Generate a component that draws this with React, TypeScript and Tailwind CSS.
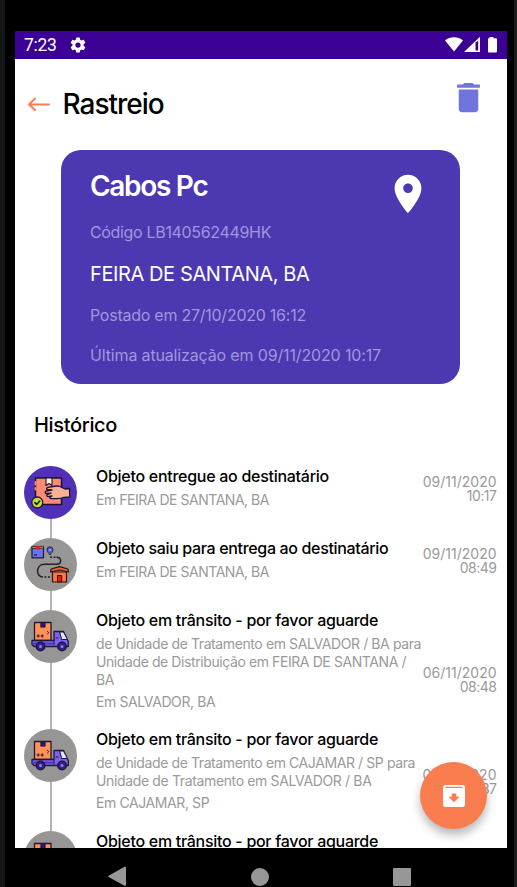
import type { ReactNode } from 'react';

type Line = { text: string; track: string };
type Event = {
  title: Line;
  details: Line[];
  place?: Line;
  date?: string;
  time?: string;
  height: string;
  kind: 'delivered' | 'route' | 'truck';
};

const events: Event[] = [
  {
    title: { text: 'Objeto entregue ao destinatário', track: 'tracking-[-0.28px]' },
    details: [],
    place: { text: 'Em FEIRA DE SANTANA, BA', track: 'tracking-[-0.47px]' },
    date: '09/11/2020', time: '10:17', height: 'h-[72px]', kind: 'delivered',
  },
  {
    title: { text: 'Objeto saiu para entrega ao destinatário', track: 'tracking-[-0.34px]' },
    details: [],
    place: { text: 'Em FEIRA DE SANTANA, BA', track: 'tracking-[-0.47px]' },
    date: '09/11/2020', time: '08:49', height: 'h-[72px]', kind: 'route',
  },
  {
    title: { text: 'Objeto em trânsito - por favor aguarde', track: 'tracking-[-0.29px]' },
    details: [
      { text: 'de Unidade de Tratamento em SALVADOR / BA para', track: 'tracking-[-0.4px]' },
      { text: 'Unidade de Distribuição em FEIRA DE SANTANA /', track: 'tracking-[-0.41px]' },
      { text: 'BA', track: 'tracking-[-0.4px]' },
    ],
    place: { text: 'Em SALVADOR, BA', track: 'tracking-[-0.4px]' },
    date: '06/11/2020', time: '08:48', height: 'h-[119px]', kind: 'truck',
  },
  {
    title: { text: 'Objeto em trânsito - por favor aguarde', track: 'tracking-[-0.29px]' },
    details: [
      { text: 'de Unidade de Tratamento em CAJAMAR / SP para', track: 'tracking-[-0.4px]' },
      { text: 'Unidade de Tratamento em SALVADOR / BA', track: 'tracking-[-0.36px]' },
    ],
    place: { text: 'Em CAJAMAR, SP', track: 'tracking-[-0.4px]' },
    date: '04/11/2020', time: '09:37', height: 'h-[102px]', kind: 'truck',
  },
  {
    title: { text: 'Objeto em trânsito - por favor aguarde', track: 'tracking-[-0.29px]' },
    details: [],
    height: 'h-[72px]', kind: 'truck',
  },
];

function PackageHand() {
  return (
    <svg viewBox="0 0 53 53" className="size-[53px]" strokeLinejoin="round" strokeLinecap="round">
      <path d="M11.500 12h26v26.500h-26z" fill="#ff8c72" stroke="#1b1233" strokeWidth="1.500" />
      <path d="M22 12v7.500l3-2 3 2V12z" fill="#fff0e8" stroke="#1b1233" strokeWidth="1.100" />
      <path d="M11.500 16v2.500M11.500 22v1.500" stroke="#ff8c72" strokeWidth="1.800" />
      <path d="M45.500 22.500L41 23l-5-2.500c-3-1-5-.5-7 0l-5 .8c-2 .5-1.800 2.300 0 2.400l4 .3-5.500 1c-2 .5-1.600 2.600 0 2.500l4.500-.3-3.300 1.200c-1.700.8-.6 2.400 1 2.100l3.300-.6-1.700 1c-1 1 .2 2 1.500 1.700 4-.3 9 .8 12-1.300l6-.3z" fill="#ffaf91" stroke="#1b1233" strokeWidth="1.300" />
      <circle cx="13.300" cy="36.500" r="5.500" fill="#c3dc33" stroke="#1b1233" strokeWidth="1.300" />
      <path d="M10.800 36.600l1.800 1.800 3.200-3.300" fill="none" stroke="#1b1233" strokeWidth="1.500" />
    </svg>
  );
}

function RouteHouse() {
  return (
    <svg viewBox="0 0 53 53" className="size-[53px]" strokeLinejoin="round">
      <path d="M8 8.500h11.500v11.300H8z" fill="#6674ed" stroke="#211a35" strokeWidth="1.200" />
      <path d="M8 8.300h11.500v2.200H8z" fill="#d48a3b" stroke="#211a35" strokeWidth=".7" />
      <path d="M12 8h4v4l-2-1-2 1z" fill="#e31c1c" />
      <path d="M10 17h3" stroke="#211a35" strokeWidth="1.200" />
      <path d="M26 17c-1-2-3-3-3-5.200a3 3 0 0 1 6 0c0 2.200-2 3.200-3 5.200z" fill="#4f5fc6" stroke="#242447" strokeWidth="1" />
      <circle cx="26" cy="12" r="1.100" fill="#a7b1ff" />
      <path d="M26 19.200h2M29.500 19.200h2M32.500 19.200c5.500 0 5.500 7 0 7H20.500c-9 0-9 12.800-1.500 12.800M20.500 39h2M24 39h2" fill="none" stroke="#24202b" strokeWidth="1.500" />
      <path d="M28.500 34h14v10h-14z" fill="#ff7647" stroke="#30150f" strokeWidth="1.200" />
      <path d="M26.500 34l.6-3 8.400-2.300 8.400 2.300.6 3-9-2z" fill="#e9603c" stroke="#30150f" strokeWidth="1.200" />
      <path d="M33.500 37.500h4.200V44h-4.200z" fill="#ed1808" stroke="#30150f" strokeWidth="1" />
    </svg>
  );
}

function Truck() {
  return (
    <svg viewBox="0 0 53 53" className="size-[53px]" strokeLinejoin="round" strokeLinecap="round">
      <path d="M10.500 12.500H27v18H10.500z" fill="#ff9254" stroke="#21163b" strokeWidth="1.300" />
      <path d="M17 12.500h4.200v4.700H17z" fill="#2a1674" stroke="#21163b" strokeWidth=".7" />
      <path d="M13 26h2.400M17 26h2.400M14.200 24.800v2.400M18.200 24.800v2.400M23.500 21.500l1.300 1.200-1.300 1.200" fill="none" stroke="#21163b" strokeWidth="1" />
      <path d="M8 30.500h22v-9h9.500l4 8.500.8 1.500v5H10l-2-2z" fill="#7c63ee" stroke="#21163b" strokeWidth="1.300" />
      <path d="M36 22h3.500l4 7.500H38z" fill="#dfe7fb" stroke="#21163b" strokeWidth="1" />
      <path d="M32 28h2M30 31v4" stroke="#21163b" strokeWidth="1" />
      <path d="M8.600 33.700h20" stroke="#4a35b8" strokeWidth="1.800" />
      {[16.5, 38].map((x) => (
        <g key={x}>
          <circle cx={x} cy="36.500" r="4.300" fill="#31208a" stroke="#1b1233" strokeWidth="1.200" />
          <circle cx={x} cy="36.500" r="1.500" fill="#8f83ea" />
        </g>
      ))}
    </svg>
  );
}

const icons: Record<Event['kind'], ReactNode> = {
  delivered: <PackageHand />,
  route: <RouteHouse />,
  truck: <Truck />,
};

function TimelineRow({ event }: { event: Event }) {
  return (
    <li className={`flex shrink-0 pr-[10.5px] pl-[9px] ${event.height}`}>
      <div className="flex w-[53px] shrink-0 flex-col items-center">
        <div className={`size-[53px] shrink-0 rounded-full ${event.kind === 'delivered' ? 'bg-[#5030b6]' : 'bg-[#979695]'}`}>
          {icons[event.kind]}
        </div>
        <div className="w-[2px] grow bg-[#b4b4b4]" />
      </div>
      <div className="ml-[19px] flex w-[325px] shrink-0 flex-col whitespace-nowrap text-sm leading-[18px] text-[#9a9a9a]">
        <h3 className={`-mt-[1.5px] mb-1 text-base leading-[22px] font-medium text-black ${event.title.track}`}>{event.title.text}</h3>
        {event.details.length > 0 && (
          <div className="mb-1">
            {event.details.map((line) => <p key={line.text} className={line.track}>{line.text}</p>)}
          </div>
        )}
        {event.place && <p className={event.place.track}>{event.place.text}</p>}
      </div>
      {event.date && (
        <div className="flex grow flex-col items-end justify-end pb-[35.5px] text-sm leading-[14px] text-[#9a9a9a]">
          <span className="whitespace-nowrap">{event.date}</span>
          <span className="tracking-[-0.5px]">{event.time}</span>
        </div>
      )}
    </li>
  );
}

export default function App() {
  return (
    <div className="flex h-[887px] w-[517px] flex-col overflow-hidden border-r-[3px] border-l-[5px] border-r-[#1c1c1c] border-l-[#161616] bg-black pt-[31px] font-['Inter',sans-serif]">
      <div className="relative mr-[7px] ml-[10px] flex h-[817px] shrink-0 flex-col overflow-hidden bg-white">
        <div className="flex h-[28px] shrink-0 items-center bg-[#3b0094] px-[9px] text-white">
          <span className="w-[45px] pt-px font-['Roboto',sans-serif] text-[17.5px] tracking-[-0.3px]">7:23</span>
          <svg viewBox="0 0 24 24" className="size-[18px]" fill="currentColor">
            <path d="M19.430 12.980a7.800 7.800 0 0 0 0-1.960l2.110-1.650a.5.5 0 0 0 .12-.64l-2-3.460a.5.5 0 0 0-.61-.22l-2.490 1a7.300 7.300 0 0 0-1.690-.98l-.38-2.650A.49.49 0 0 0 14 2h-4a.49.49 0 0 0-.49.42l-.38 2.650c-.61.25-1.170.59-1.690.98l-2.490-1a.5.5 0 0 0-.61.22l-2 3.460a.5.5 0 0 0 .12.640l2.110 1.650a8 8 0 0 0 0 1.960l-2.110 1.650a.5.5 0 0 0-.12.640l2 3.460c.12.220.39.300.61.220l2.490-1c.52.400 1.080.730 1.690.980l.38 2.650c.03.240.24.420.49.420h4c.25 0 .46-.18.490-.42l.38-2.650a7.700 7.700 0 0 0 1.690-.98l2.490 1c.23.090.49 0 .61-.22l2-3.460a.5.5 0 0 0-.12-.64zM12 15.500a3.500 3.500 0 1 1 0-7 3.500 3.500 0 0 1 0 7z" />
          </svg>
          <svg viewBox="0 0 53 18" className="ml-auto h-[18px] w-[53px]" fill="currentColor">
            <path d="M0 4.500C5 .2 13 .2 18 4.500L9 15.500z" />
            <path fillRule="evenodd" d="M19 16L35 .8V16zM30.500 6.500V14.500h2.700V4.500z" />
            <path d="M44.500 1h4v1.200h2.300c.7 0 1.200.4 1.200 1v12c0 .8-.5 1.300-1.200 1.300h-6.700c-.7 0-1.100-.5-1.100-1.300v-12c0-.6.400-1 1.100-1h.4z" />
          </svg>
        </div>

        <header className="flex h-[91.400px] shrink-0 items-start pr-[19px] pl-[13px]">
          <svg viewBox="0 0 22 14" className="mt-[38px] h-[14px] w-[22px]" fill="none" stroke="#fb7e52" strokeWidth="2" strokeLinecap="round" strokeLinejoin="round">
            <path d="M21 7.500H1.500M7 1.500l-6 6 6 5.500" />
          </svg>
          <h1 className="mt-[27px] ml-[12.500px] text-[28px] leading-[36px] font-medium tracking-[-1px] text-black">Rastreio</h1>
          <svg viewBox="0 0 24 24" className="mt-[19px] ml-auto size-[39px]" fill="#6f75dd">
            <path d="M6 19c0 1.100.9 2 2 2h8c1.100 0 2-.9 2-2V7H6v12zM19 4h-3.500l-1-1h-5l-1 1H5v2h14V4z" />
          </svg>
        </header>

        <section className="mr-[47px] ml-[46.4px] flex h-[233.600px] shrink-0 justify-between rounded-[20px] bg-[#4c38b1] pt-[18.6px] pr-[29px] pl-[28.6px] whitespace-nowrap">
          <div className="text-base leading-6 text-[#a197dc]">
            <h2 className="text-[28px] leading-[34px] font-semibold tracking-[-1.300px] text-white">Cabos Pc</h2>
            <p className="mt-[17px] tracking-[-0.33px]">Código LB140562449HK</p>
            <p className="mt-4 text-xl leading-7 tracking-[-0.4px] text-white">FEIRA DE SANTANA, BA</p>
            <p className="mt-[15.4px] tracking-[-0.25px]">Postado em 27/10/2020 16:12</p>
            <p className="mt-[15.5px] tracking-[-0.15px]">Última atualização em 09/11/2020 10:17</p>
          </div>
          <svg viewBox="0 0 24 24" className="mt-[2px] size-[46px] shrink-0" fill="white">
            <path d="M12 2C8.130 2 5 5.130 5 9c0 5.250 7 13 7 13s7-7.750 7-13c0-3.870-3.130-7-7-7zm0 9.500a2.500 2.500 0 1 1 0-5 2.500 2.500 0 0 1 0 5z" />
          </svg>
        </section>

        <h2 className="mt-[27px] ml-[19px] text-xl leading-7 font-medium tracking-[-0.33px] text-black">Histórico</h2>
        <ul className="mt-[27.300px] flex flex-col">
          {events.map((event, i) => <TimelineRow key={i} event={event} />)}
        </ul>

        <button className="absolute right-[20px] bottom-[19px] grid size-[67px] place-items-center rounded-full bg-[#fa7d50] shadow-[0_6px_10px_rgba(0,0,0,0.28)]">
          <svg viewBox="0 0 22 22" className="size-[22px]">
            <path d="M2.700 0h16.600Q22 0 22 2.700v16.600Q22 22 19.300 22H2.700Q0 22 0 19.300V2.700Q0 0 2.700 0z" fill="white" />
            <path d="M3 2.300h16" stroke="#fa7d50" strokeWidth="1.200" strokeLinecap="round" />
            <path d="M8.700 8.500h4.600v3.200h3.400L11 17.300l-5.700-5.600h3.400z" fill="#fa7d50" />
          </svg>
        </button>
      </div>

      <nav className="mt-[18px] flex shrink-0 items-start pl-[103px] text-[#979797]">
        <svg viewBox="0 0 18 21" className="h-[21px] w-[18px]" fill="currentColor">
          <path d="M.6 9.700L16.500.8q1.500-.5 1.500 1v17q0 1.500-1.500 1L.6 11q-.8-.6 0-1.300z" />
        </svg>
        <div className="mt-[2px] ml-[125px] size-[18px] rounded-full bg-current" />
        <div className="mt-[2px] ml-[124px] size-[18px] rounded-[1px] bg-current" />
      </nav>
    </div>
  );
}
